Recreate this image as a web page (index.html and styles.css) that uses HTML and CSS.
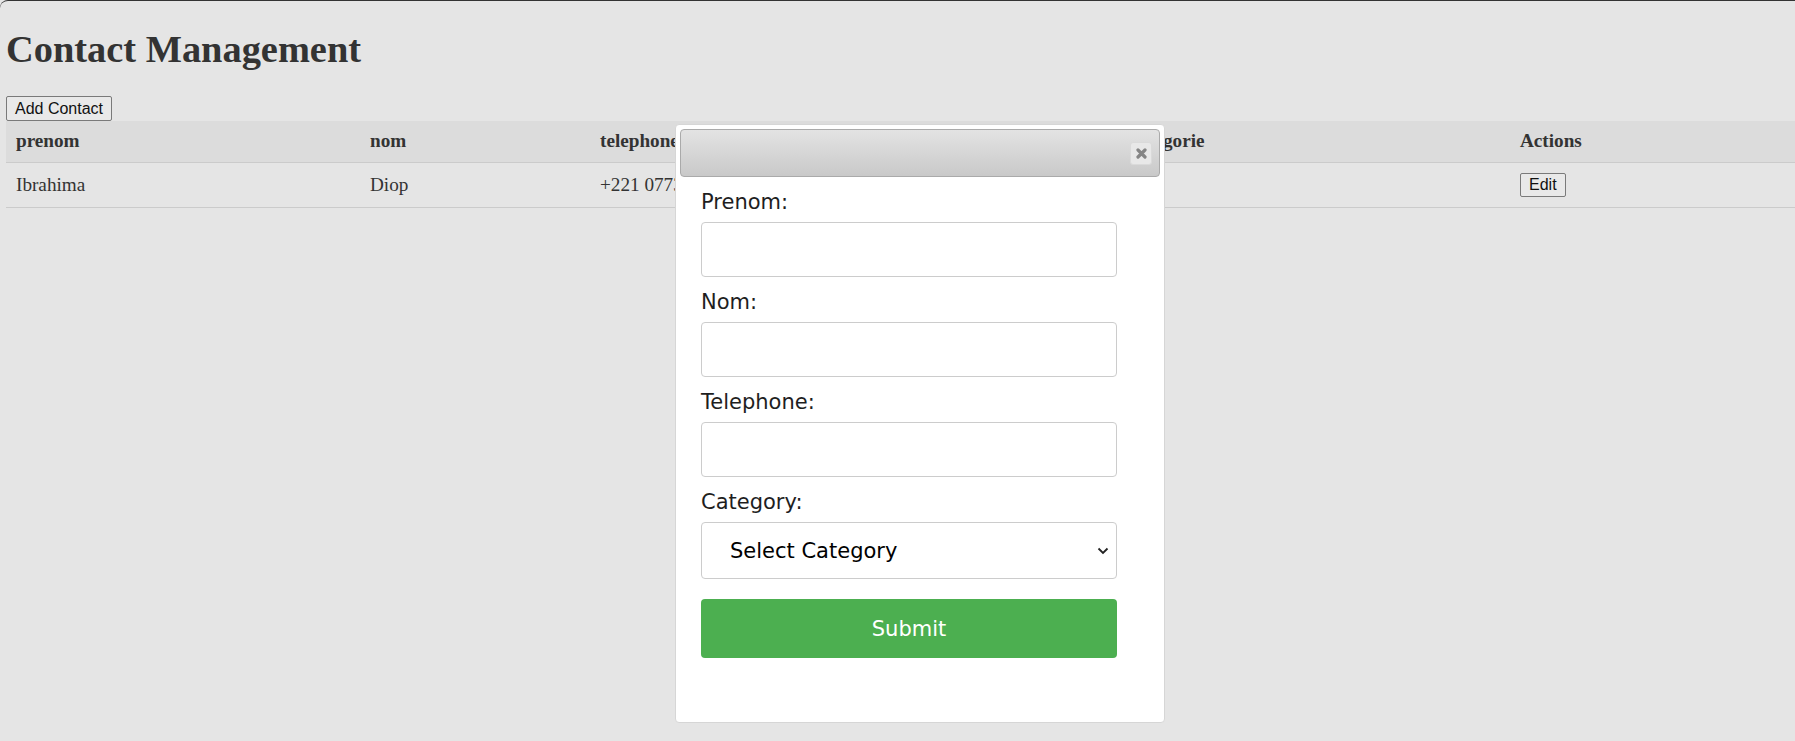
FILE: index.html
```html
<!DOCTYPE html>
<html lang="fr">
<head>
<meta charset="utf-8">
<title>Contact Management</title>
<link rel="stylesheet" href="styles.css">
</head>
<body>
<div class="app">
  <h1 class="title">Contact Management</h1>
  <button class="btn add-btn" type="button">Add Contact</button>
  <table class="contacts">
    <colgroup>
      <col class="c-prenom">
      <col class="c-nom">
      <col class="c-tel">
      <col class="c-cat">
      <col class="c-act">
    </colgroup>
    <thead>
      <tr class="head-row">
        <th>prenom</th>
        <th>nom</th>
        <th>telephone</th>
        <th>categorie</th>
        <th>Actions</th>
      </tr>
    </thead>
    <tbody>
      <tr class="data-row">
        <td>Ibrahima</td>
        <td>Diop</td>
        <td>+221 0773</td>
        <td></td>
        <td><button class="btn edit-btn" type="button">Edit</button></td>
      </tr>
    </tbody>
  </table>
</div>

<div class="dialog">
  <div class="titlebar">
    <button class="close" type="button" aria-label="Close">
      <svg width="11" height="11" viewBox="0 0 11 11"><path d="M2 2 L9 9 M9 2 L2 9" stroke="#858585" stroke-width="3.2" stroke-linecap="round"/></svg>
    </button>
  </div>
  <form class="form">
    <label class="lbl">Prenom:</label>
    <input class="field" type="text">
    <label class="lbl">Nom:</label>
    <input class="field" type="text">
    <label class="lbl">Telephone:</label>
    <input class="field" type="text">
    <label class="lbl">Category:</label>
    <div class="select-wrap">
      <select class="field select">
        <option>Select Category</option>
      </select>
      <svg class="chev" width="12" height="8" viewBox="0 0 12 8"><path d="M1.5 1.5 L6 6 L10.5 1.5" fill="none" stroke="#222" stroke-width="1.8"/></svg>
    </div>
    <button class="submit" type="button">Submit</button>
  </form>
</div>
</body>
</html>
```

FILE: styles.css
```css
html, body {
  margin: 0;
  padding: 0;
}
body {
  background: #e5e5e5;
  font-family: "Liberation Serif", "Times New Roman", serif;
  color: #333;
}
.app {
  border-top: 1px solid #333;
  border-top-left-radius: 8px;
  padding-left: 6px;
  min-height: 740px;
  box-sizing: border-box;
}
.title {
  margin: 26px 0 25px 0;
  font-family: "Liberation Serif", "Times New Roman", serif;
  font-size: 38.4px;
  line-height: 44px;
  font-weight: bold;
  color: #333;
}
.btn {
  display: block;
  font-family: "Liberation Sans", Arial, sans-serif;
  font-size: 16px;
  color: #111;
  background: #e9e9e9;
  border: 1px solid #7a7a7a;
  border-radius: 2px;
  padding: 0 8px;
  box-sizing: border-box;
  white-space: nowrap;
}
.add-btn {
  height: 25px;
}
.edit-btn {
  height: 24px;
}
.contacts {
  width: 100%;
  border-collapse: collapse;
  table-layout: fixed;
  font-size: 19.2px;
}
.c-prenom { width: 354px; }
.c-nom { width: 230px; }
.c-tel { width: 530px; }
.c-cat { width: 390px; }
.c-act { width: auto; }
.contacts th,
.contacts td {
  text-align: left;
  padding: 0 10px;
  border-bottom: 1px solid #cbcbcb;
  vertical-align: middle;
  white-space: nowrap;
  overflow: hidden;
}
.contacts th {
  font-weight: bold;
}
.head-row {
  background: #dcdcdc;
  height: 41px;
}
.data-row {
  height: 45px;
}

/* dialog */
.dialog {
  position: absolute;
  left: 675px;
  top: 124px;
  width: 490px;
  height: 599px;
  box-sizing: border-box;
  background: #fff;
  border: 1px solid #d6d6d6;
  border-radius: 4px;
  padding: 4px;
  font-family: "DejaVu Sans", Verdana, sans-serif;
}
.titlebar {
  height: 48px;
  box-sizing: border-box;
  border: 1px solid #aaa;
  border-radius: 4px;
  background: linear-gradient(to bottom, #e3e3e3 0%, #d6d6d6 50%, #c9c9c9 100%);
  display: flex;
  justify-content: flex-end;
  align-items: center;
  padding-right: 7px;
}
.close {
  width: 22px;
  height: 23px;
  padding: 0;
  margin: 0;
  border: 1px solid #dadada;
  border-radius: 3px;
  background: #e8e8e8;
  display: flex;
  align-items: center;
  justify-content: center;
}
.close svg {
  display: block;
}
.form {
  padding: 13px 0 0 21px;
}
.lbl {
  display: block;
  font-size: 21px;
  line-height: 24px;
  color: #1e1e1e;
}
.field {
  display: block;
  width: 416px;
  height: 55px;
  box-sizing: border-box;
  margin: 8px 0 13px 0;
  border: 1px solid #cccccc;
  border-radius: 4px;
  background: #fff;
  font-family: "DejaVu Sans", Verdana, sans-serif;
  font-size: 21px;
  padding: 0 20px;
}
.select-wrap {
  position: relative;
  width: 416px;
  margin: 8px 0 20px 0;
}
.select {
  -webkit-appearance: none;
  appearance: none;
  height: 57px;
  margin: 0;
  padding-left: 28px;
  color: #000;
}
.chev {
  position: absolute;
  right: 8px;
  top: 25px;
  pointer-events: none;
}
.submit {
  display: block;
  width: 416px;
  height: 59px;
  border: none;
  border-radius: 4px;
  background: #4caf50;
  color: #fff;
  font-family: "DejaVu Sans", Verdana, sans-serif;
  font-size: 21px;
  padding: 0;
}
```
